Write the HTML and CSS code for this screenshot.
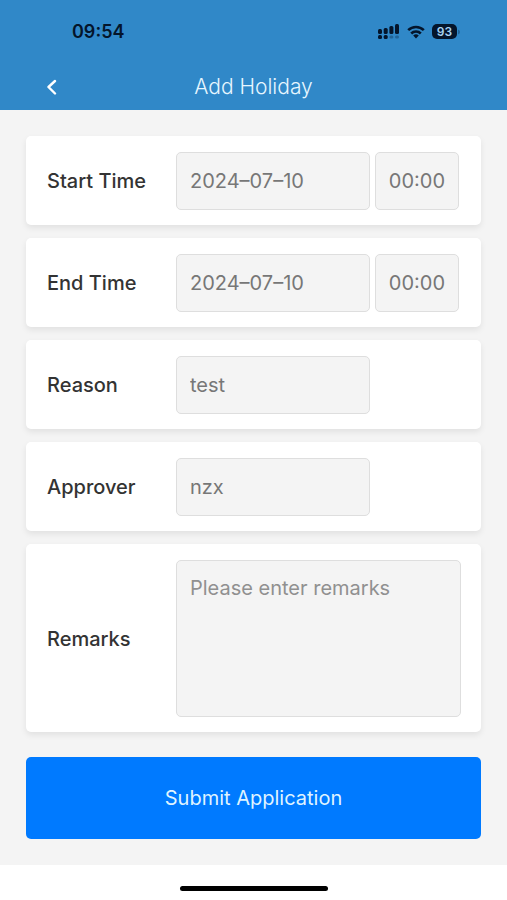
FILE: index.html
```html
<!DOCTYPE html>
<html lang="en">
<head>
<meta charset="utf-8">
<meta name="viewport" content="width=device-width, initial-scale=1">
<title>Add Holiday</title>
<link rel="stylesheet" href="styles.css">
</head>
<body>
<header class="header">
  <div class="status">
    <span class="clock">09:54</span>
    <div class="indicators">
      <svg class="signal" width="22" height="16" viewBox="0 0 22 16" aria-hidden="true">
        <rect x="0" y="5" width="4" height="5" rx="1.5"/>
        <rect x="5.7" y="4" width="4" height="6" rx="1.5"/>
        <rect x="11.4" y="2" width="4" height="8" rx="1.5"/>
        <rect x="17" y="0" width="4" height="10" rx="1.5"/>
        <rect x="0" y="11" width="4" height="4" rx="1.5"/>
        <rect x="5.7" y="11" width="4" height="4" rx="1.5"/>
        <rect class="faint" x="11.4" y="11.5" width="4" height="3" rx="1.5"/>
        <rect class="faint" x="17" y="11.5" width="4" height="3" rx="1.5"/>
      </svg>
      <svg class="wifi" width="18" height="14" viewBox="0 0 18 14" aria-hidden="true">
        <path class="arc" d="M1.2 5.2a11 11 0 0 1 15.6 0M4.2 8.5a6.8 6.8 0 0 1 9.6 0"/>
        <path d="M6.2 10.5a4 4 0 0 1 5.6 0L9 13.4z"/>
      </svg>
      <div class="power">
        <span class="battery">93</span>
        <svg width="2" height="6" viewBox="0 0 2 6" aria-hidden="true"><path class="faint" d="M0 0.5Q2 1.2 2 3T0 5.5z"/></svg>
      </div>
    </div>
  </div>
  <nav class="nav">
    <button class="back" type="button" aria-label="Back">
      <svg width="12" height="16" viewBox="0 0 12 16" aria-hidden="true"><path d="M9 2 2.5 8 9 14.5"/></svg>
    </button>
    <h1 class="title">Add Holiday</h1>
  </nav>
</header>
<main class="main">
  <form class="form">
    <div class="card">
      <label class="label" for="start-date">Start Time</label>
      <div class="controls">
        <input class="field" id="start-date" type="text" value="2024–07–10">
        <input class="field time" type="text" value="00:00" aria-label="Start hour">
      </div>
    </div>
    <div class="card">
      <label class="label" for="end-date">End Time</label>
      <div class="controls">
        <input class="field" id="end-date" type="text" value="2024–07–10">
        <input class="field time" type="text" value="00:00" aria-label="End hour">
      </div>
    </div>
    <div class="card">
      <label class="label" for="reason">Reason</label>
      <div class="controls">
        <input class="field" id="reason" type="text" value="test">
      </div>
    </div>
    <div class="card">
      <label class="label" for="approver">Approver</label>
      <div class="controls">
        <input class="field" id="approver" type="text" value="nzx">
      </div>
    </div>
    <div class="card">
      <label class="label" for="remarks">Remarks</label>
      <div class="controls">
        <textarea class="field remarks" id="remarks" placeholder="Please enter remarks"></textarea>
      </div>
    </div>
    <button class="submit" type="submit">Submit Application</button>
  </form>
</main>
<footer class="footer"><div class="home"></div></footer>
</body>
</html>
```
FILE: styles.css
```css
* {
  box-sizing: border-box;
}

body {
  margin: 0;
  min-height: 100vh;
  display: flex;
  flex-direction: column;
  background: #fff;
  font-family: Inter, "Liberation Sans", sans-serif;
  font-size: 20px;
  color: #333;
}

.header {
  background: #3088c8;
}

.status {
  display: flex;
  align-items: center;
  justify-content: space-between;
  height: 63px;
  padding: 0 47px 0 72px;
  color: #04152b;
}

.clock {
  font-size: 18px;
  font-weight: 600;
}

.indicators {
  display: flex;
  align-items: center;
  gap: 7px;
  fill: #04152b;
}

.faint {
  opacity: 0.3;
}

.arc {
  fill: none;
  stroke: #04152b;
  stroke-width: 2.6;
}

.power {
  display: flex;
  align-items: center;
  gap: 1px;
}

.battery {
  width: 25px;
  border-radius: 5px;
  background: #04152b;
  color: #a9d3f2;
  font-size: 12px;
  font-weight: 600;
  line-height: 15px;
  text-align: center;
}

.nav {
  display: grid;
  grid-template-columns: 64px 1fr 64px;
  align-items: center;
  height: 47px;
}

.back {
  display: flex;
  justify-content: flex-end;
  padding: 0 6px;
  border: 0;
  background: none;
}

.back path {
  fill: none;
  stroke: #fff;
  stroke-width: 2.4;
  stroke-linecap: round;
  stroke-linejoin: round;
}

.title {
  margin: 0;
  color: #e6f6ff;
  font-size: 21px;
  font-weight: 300;
  text-align: center;
}

.main {
  flex: 1;
  padding: 26px;
  background: #f4f4f4;
}

.form {
  display: flex;
  flex-direction: column;
  gap: 13px;
}

.card {
  display: grid;
  grid-template-columns: 129px 1fr;
  align-items: center;
  padding: 16px 20px 15px 21px;
  border-radius: 5px;
  background: #fff;
  box-shadow: 0 3px 6px rgba(0, 0, 0, 0.08);
}

.label {
  font-weight: 500;
}

.controls {
  display: flex;
  gap: 5px;
}

.field {
  width: 68%;
  height: 58px;
  padding: 0 13px;
  border: 1px solid #dedede;
  border-radius: 5px;
  outline: 0;
  background: #f4f4f4;
  color: #777;
  font-family: inherit;
  font-size: 20px;
  font-weight: 400;
}

.time {
  width: 84px;
}

.remarks {
  width: 100%;
  height: 157px;
  padding: 14px 13px;
  line-height: 26px;
  resize: none;
}

.remarks::placeholder {
  color: #909090;
}

.submit {
  height: 82px;
  margin-top: 12px;
  border: 0;
  border-radius: 5px;
  background: #007aff;
  color: #dff3ff;
  font-family: inherit;
  font-size: 20px;
  font-weight: 400;
}

.footer {
  display: flex;
  justify-content: center;
  padding: 21px 0 9px;
}

.home {
  width: 148px;
  height: 5px;
  border-radius: 3px;
  background: #000;
}
```
